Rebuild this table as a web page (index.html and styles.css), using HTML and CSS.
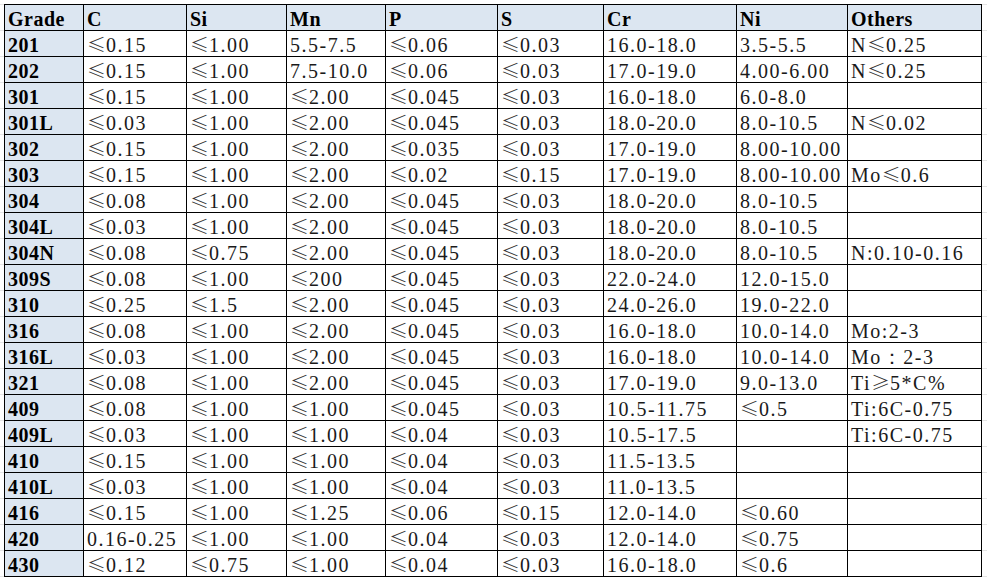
FILE: index.html
```html
<!DOCTYPE html>
<html>
<head>
<meta charset="utf-8">
<link rel="stylesheet" href="styles.css">
</head>
<body>
<div class="sheet">
<table class="grid">
<colgroup>
<col class="c-grade"><col class="c-c"><col class="c-si"><col class="c-mn"><col class="c-p"><col class="c-s"><col class="c-cr"><col class="c-ni"><col class="c-oth">
</colgroup>
<thead>
<tr><th>Grade</th><th>C</th><th>Si</th><th>Mn</th><th>P</th><th>S</th><th>Cr</th><th>Ni</th><th>Others</th></tr>
</thead>
<tbody>
<tr><th>201</th><td><span class="le">≤</span>0.15</td><td><span class="le">≤</span>1.00</td><td>5.5-7.5</td><td><span class="le">≤</span>0.06</td><td><span class="le">≤</span>0.03</td><td>16.0-18.0</td><td>3.5-5.5</td><td>N<span class="le">≤</span>0.25</td></tr>
<tr><th>202</th><td><span class="le">≤</span>0.15</td><td><span class="le">≤</span>1.00</td><td>7.5-10.0</td><td><span class="le">≤</span>0.06</td><td><span class="le">≤</span>0.03</td><td>17.0-19.0</td><td>4.00-6.00</td><td>N<span class="le">≤</span>0.25</td></tr>
<tr><th>301</th><td><span class="le">≤</span>0.15</td><td><span class="le">≤</span>1.00</td><td><span class="le">≤</span>2.00</td><td><span class="le">≤</span>0.045</td><td><span class="le">≤</span>0.03</td><td>16.0-18.0</td><td>6.0-8.0</td><td></td></tr>
<tr><th>301L</th><td><span class="le">≤</span>0.03</td><td><span class="le">≤</span>1.00</td><td><span class="le">≤</span>2.00</td><td><span class="le">≤</span>0.045</td><td><span class="le">≤</span>0.03</td><td>18.0-20.0</td><td>8.0-10.5</td><td>N<span class="le">≤</span>0.02</td></tr>
<tr><th>302</th><td><span class="le">≤</span>0.15</td><td><span class="le">≤</span>1.00</td><td><span class="le">≤</span>2.00</td><td><span class="le">≤</span>0.035</td><td><span class="le">≤</span>0.03</td><td>17.0-19.0</td><td>8.00-10.00</td><td></td></tr>
<tr><th>303</th><td><span class="le">≤</span>0.15</td><td><span class="le">≤</span>1.00</td><td><span class="le">≤</span>2.00</td><td><span class="le">≤</span>0.02</td><td><span class="le">≤</span>0.15</td><td>17.0-19.0</td><td>8.00-10.00</td><td>Mo<span class="le">≤</span>0.6</td></tr>
<tr><th>304</th><td><span class="le">≤</span>0.08</td><td><span class="le">≤</span>1.00</td><td><span class="le">≤</span>2.00</td><td><span class="le">≤</span>0.045</td><td><span class="le">≤</span>0.03</td><td>18.0-20.0</td><td>8.0-10.5</td><td></td></tr>
<tr><th>304L</th><td><span class="le">≤</span>0.03</td><td><span class="le">≤</span>1.00</td><td><span class="le">≤</span>2.00</td><td><span class="le">≤</span>0.045</td><td><span class="le">≤</span>0.03</td><td>18.0-20.0</td><td>8.0-10.5</td><td></td></tr>
<tr><th>304N</th><td><span class="le">≤</span>0.08</td><td><span class="le">≤</span>0.75</td><td><span class="le">≤</span>2.00</td><td><span class="le">≤</span>0.045</td><td><span class="le">≤</span>0.03</td><td>18.0-20.0</td><td>8.0-10.5</td><td>N:0.10-0.16</td></tr>
<tr><th>309S</th><td><span class="le">≤</span>0.08</td><td><span class="le">≤</span>1.00</td><td><span class="le">≤</span>200</td><td><span class="le">≤</span>0.045</td><td><span class="le">≤</span>0.03</td><td>22.0-24.0</td><td>12.0-15.0</td><td></td></tr>
<tr><th>310</th><td><span class="le">≤</span>0.25</td><td><span class="le">≤</span>1.5</td><td><span class="le">≤</span>2.00</td><td><span class="le">≤</span>0.045</td><td><span class="le">≤</span>0.03</td><td>24.0-26.0</td><td>19.0-22.0</td><td></td></tr>
<tr><th>316</th><td><span class="le">≤</span>0.08</td><td><span class="le">≤</span>1.00</td><td><span class="le">≤</span>2.00</td><td><span class="le">≤</span>0.045</td><td><span class="le">≤</span>0.03</td><td>16.0-18.0</td><td>10.0-14.0</td><td>Mo:2-3</td></tr>
<tr><th>316L</th><td><span class="le">≤</span>0.03</td><td><span class="le">≤</span>1.00</td><td><span class="le">≤</span>2.00</td><td><span class="le">≤</span>0.045</td><td><span class="le">≤</span>0.03</td><td>16.0-18.0</td><td>10.0-14.0</td><td>Mo：2-3</td></tr>
<tr><th>321</th><td><span class="le">≤</span>0.08</td><td><span class="le">≤</span>1.00</td><td><span class="le">≤</span>2.00</td><td><span class="le">≤</span>0.045</td><td><span class="le">≤</span>0.03</td><td>17.0-19.0</td><td>9.0-13.0</td><td>Ti<span class="le">≥</span>5*C%</td></tr>
<tr><th>409</th><td><span class="le">≤</span>0.08</td><td><span class="le">≤</span>1.00</td><td><span class="le">≤</span>1.00</td><td><span class="le">≤</span>0.045</td><td><span class="le">≤</span>0.03</td><td>10.5-11.75</td><td><span class="le">≤</span>0.5</td><td>Ti:6C-0.75</td></tr>
<tr><th>409L</th><td><span class="le">≤</span>0.03</td><td><span class="le">≤</span>1.00</td><td><span class="le">≤</span>1.00</td><td><span class="le">≤</span>0.04</td><td><span class="le">≤</span>0.03</td><td>10.5-17.5</td><td></td><td>Ti:6C-0.75</td></tr>
<tr><th>410</th><td><span class="le">≤</span>0.15</td><td><span class="le">≤</span>1.00</td><td><span class="le">≤</span>1.00</td><td><span class="le">≤</span>0.04</td><td><span class="le">≤</span>0.03</td><td>11.5-13.5</td><td></td><td></td></tr>
<tr><th>410L</th><td><span class="le">≤</span>0.03</td><td><span class="le">≤</span>1.00</td><td><span class="le">≤</span>1.00</td><td><span class="le">≤</span>0.04</td><td><span class="le">≤</span>0.03</td><td>11.0-13.5</td><td></td><td></td></tr>
<tr><th>416</th><td><span class="le">≤</span>0.15</td><td><span class="le">≤</span>1.00</td><td><span class="le">≤</span>1.25</td><td><span class="le">≤</span>0.06</td><td><span class="le">≤</span>0.15</td><td>12.0-14.0</td><td><span class="le">≤</span>0.60</td><td></td></tr>
<tr><th>420</th><td>0.16-0.25</td><td><span class="le">≤</span>1.00</td><td><span class="le">≤</span>1.00</td><td><span class="le">≤</span>0.04</td><td><span class="le">≤</span>0.03</td><td>12.0-14.0</td><td><span class="le">≤</span>0.75</td><td></td></tr>
<tr><th>430</th><td><span class="le">≤</span>0.12</td><td><span class="le">≤</span>0.75</td><td><span class="le">≤</span>1.00</td><td><span class="le">≤</span>0.04</td><td><span class="le">≤</span>0.03</td><td>16.0-18.0</td><td><span class="le">≤</span>0.6</td><td></td></tr>
</tbody>
</table>
</div>
</body>
</html>
```

FILE: styles.css
```css
html, body {
  margin: 0;
  padding: 0;
  background: #fff;
}

.sheet {
  padding: 4px 0 0 4px;
  width: 987px;
  height: 581px;
  box-sizing: border-box;
  background-color: #fff;
  background-image:
    linear-gradient(to bottom, #e4e4e4 1px, transparent 1px);
  background-size: 100% 26px;
  background-position: 0 4px;
  overflow: hidden;
}

.grid {
  border-collapse: collapse;
  table-layout: fixed;
  width: 978px;
  font-family: "Liberation Serif", "DejaVu Serif", serif;
  font-size: 20px;
  color: #000;
  background: #fff;
}

.c-grade { width: 79px; }
.c-c { width: 103px; }
.c-si { width: 100px; }
.c-mn { width: 99px; }
.c-p { width: 112px; }
.c-s { width: 106px; }
.c-cr { width: 133px; }
.c-ni { width: 111px; }
.c-oth { width: 134px; }

.grid th,
.grid td {
  border: 1px solid #000;
  height: 25px;
  padding: 3px 0 0 3px;
  box-sizing: border-box;
  line-height: 22px;
  text-align: left;
  vertical-align: middle;
  white-space: nowrap;
  overflow: hidden;
}

.grid td {
  font-weight: normal;
  letter-spacing: 1.5px;
  color: #1a1a1a;
}

.grid th {
  font-weight: bold;
  background: #dce6f1;
  letter-spacing: 0.5px;
}

.le {
  font-family: "Noto Sans CJK SC", "Noto Sans CJK JP", sans-serif;
  font-weight: 300;
  font-size: 19px;
  line-height: 1px;
  letter-spacing: 0;
  color: #333;
}
```
